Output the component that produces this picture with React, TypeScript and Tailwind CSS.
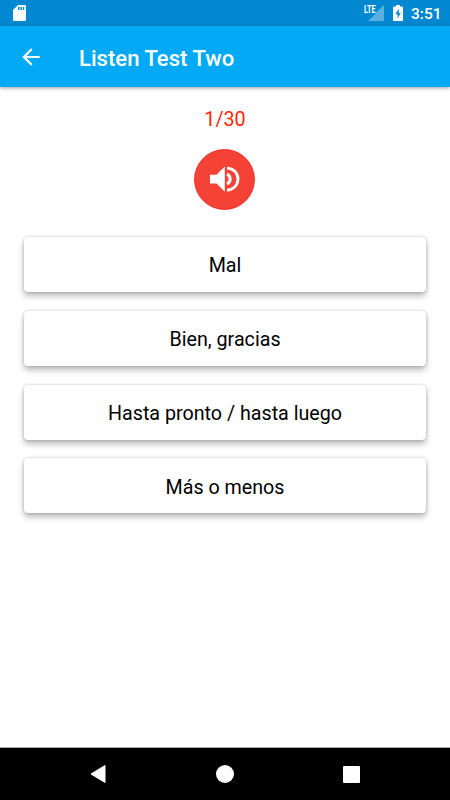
const answers = ["Mal", "Bien, gracias", "Hasta pronto / hasta luego", "Más o menos"];

function StatusBar() {
  return (
    <div className="flex h-[26px] shrink-0 items-start bg-[#0288d1] pl-[13px] pr-[10px] pt-[5px] text-white">
      <svg width="13" height="16" viewBox="0 0 13 16">
        <path d="M5 0h6.7Q13 0 13 1.300v13.400Q13 16 11.700 16H1.300Q0 16 0 14.700V5Z" fill="currentColor" />
        <path d="M5 2h1.500v3H5zM7.400 2h1.500v3H7.400zM9.800 2h1.500v3H9.800z" fill="#0288d1" />
      </svg>
      <div className="ml-auto flex">
        <div className="relative h-4 w-5">
          <svg width="20" height="16" viewBox="0 0 20 16">
            <path d="M20 0v16H4L12 8.500V7.500Z" fill="#fff" fillOpacity=".35" />
          </svg>
          <span className="absolute left-0 top-0 origin-left scale-x-[.72] text-[10px] font-bold leading-[10px]">
            LTE
          </span>
        </div>
        <svg className="ml-[9px]" width="10" height="16" viewBox="0 0 10 16">
          <path d="M3 0h4v1.500h2q1 0 1 1V15q0 1-1 1H1q-1 0-1-1V2.500q0-1 1-1h2Z" fill="currentColor" />
          <path d="M5.800 3.700 2.300 9.300h2.200v4.200L7.800 7.900H5.800Z" fill="#0288d1" />
        </svg>
        <span className="ml-[8px] w-[29px] whitespace-nowrap text-[15.500px] font-medium leading-[18px]">3:51</span>
      </div>
    </div>
  );
}

function AppBar() {
  return (
    <header className="z-10 flex h-[61px] shrink-0 items-center bg-[#03a9f4] pl-[18px] text-white shadow-[0_1px_4px_rgba(0,0,0,0.4)]">
      <svg width="26" height="26" viewBox="0 0 24 24" fill="currentColor">
        <path d="M20 11H7.830l5.590-5.590L12 4l-8 8 8 8 1.410-1.410L7.830 13H20v-2z" />
      </svg>
      <h1 className="ml-[35px] pt-[3px] text-[22.100px] font-medium leading-7">Listen Test Two</h1>
    </header>
  );
}

function SpeakerButton() {
  return (
    <button className="mr-px mt-[16px] h-[61px] w-[61px]" aria-label="Play">
      <svg width="61" height="61" viewBox="0 0 61 61">
        <circle cx="30.500" cy="30.500" r="30" fill="#f44336" stroke="#ee1c1c" strokeWidth=".8" />
        <path d="M16 25.700h6.500L30.800 17.600v25.200l-8.300-8.300H16Z" fill="#fff" />
        <path d="M33 19.100a11 11 0 0 1 0 22" fill="none" stroke="#fff" strokeWidth="2.800" />
        <path d="M33 25.200a5.400 5.400 0 0 1 0 9.800" fill="none" stroke="#fff" strokeWidth="3" />
      </svg>
    </button>
  );
}

export default function App() {
  return (
    <div className="flex h-[800px] w-[450px] flex-col overflow-hidden bg-white font-['Roboto',sans-serif]">
      <StatusBar />
      <AppBar />
      <main className="flex grow flex-col items-center">
        <div className="mt-[20px] text-[19.700px] leading-[26px] text-[#ff2600]">1/30</div>
        <SpeakerButton />
        <div className="mt-[27px] flex w-[402px] flex-col gap-[18.840px]">
          {answers.map((answer) => (
            <button
              key={answer}
              className="flex h-[55px] items-center justify-center rounded-[4px] bg-white pt-[3px] text-[19.700px] text-black shadow-[0_4px_6px_rgba(0,0,0,0.27),0_0_3px_rgba(0,0,0,0.22)]"
            >
              {answer}
            </button>
          ))}
        </div>
      </main>
      <nav className="flex h-[53px] shrink-0 items-center border-t border-[#aaa] bg-black pl-[90px]">
        <svg width="16" height="18" viewBox="0 0 16 18">
          <path d="M15 .5v17L1 9Z" fill="#fff" stroke="#fff" strokeLinejoin="round" />
        </svg>
        <div className="ml-[110px] h-[18px] w-[18px] rounded-full bg-white" />
        <div className="ml-[109px] h-[17px] w-[17px] rounded-[1px] bg-white" />
      </nav>
    </div>
  );
}
